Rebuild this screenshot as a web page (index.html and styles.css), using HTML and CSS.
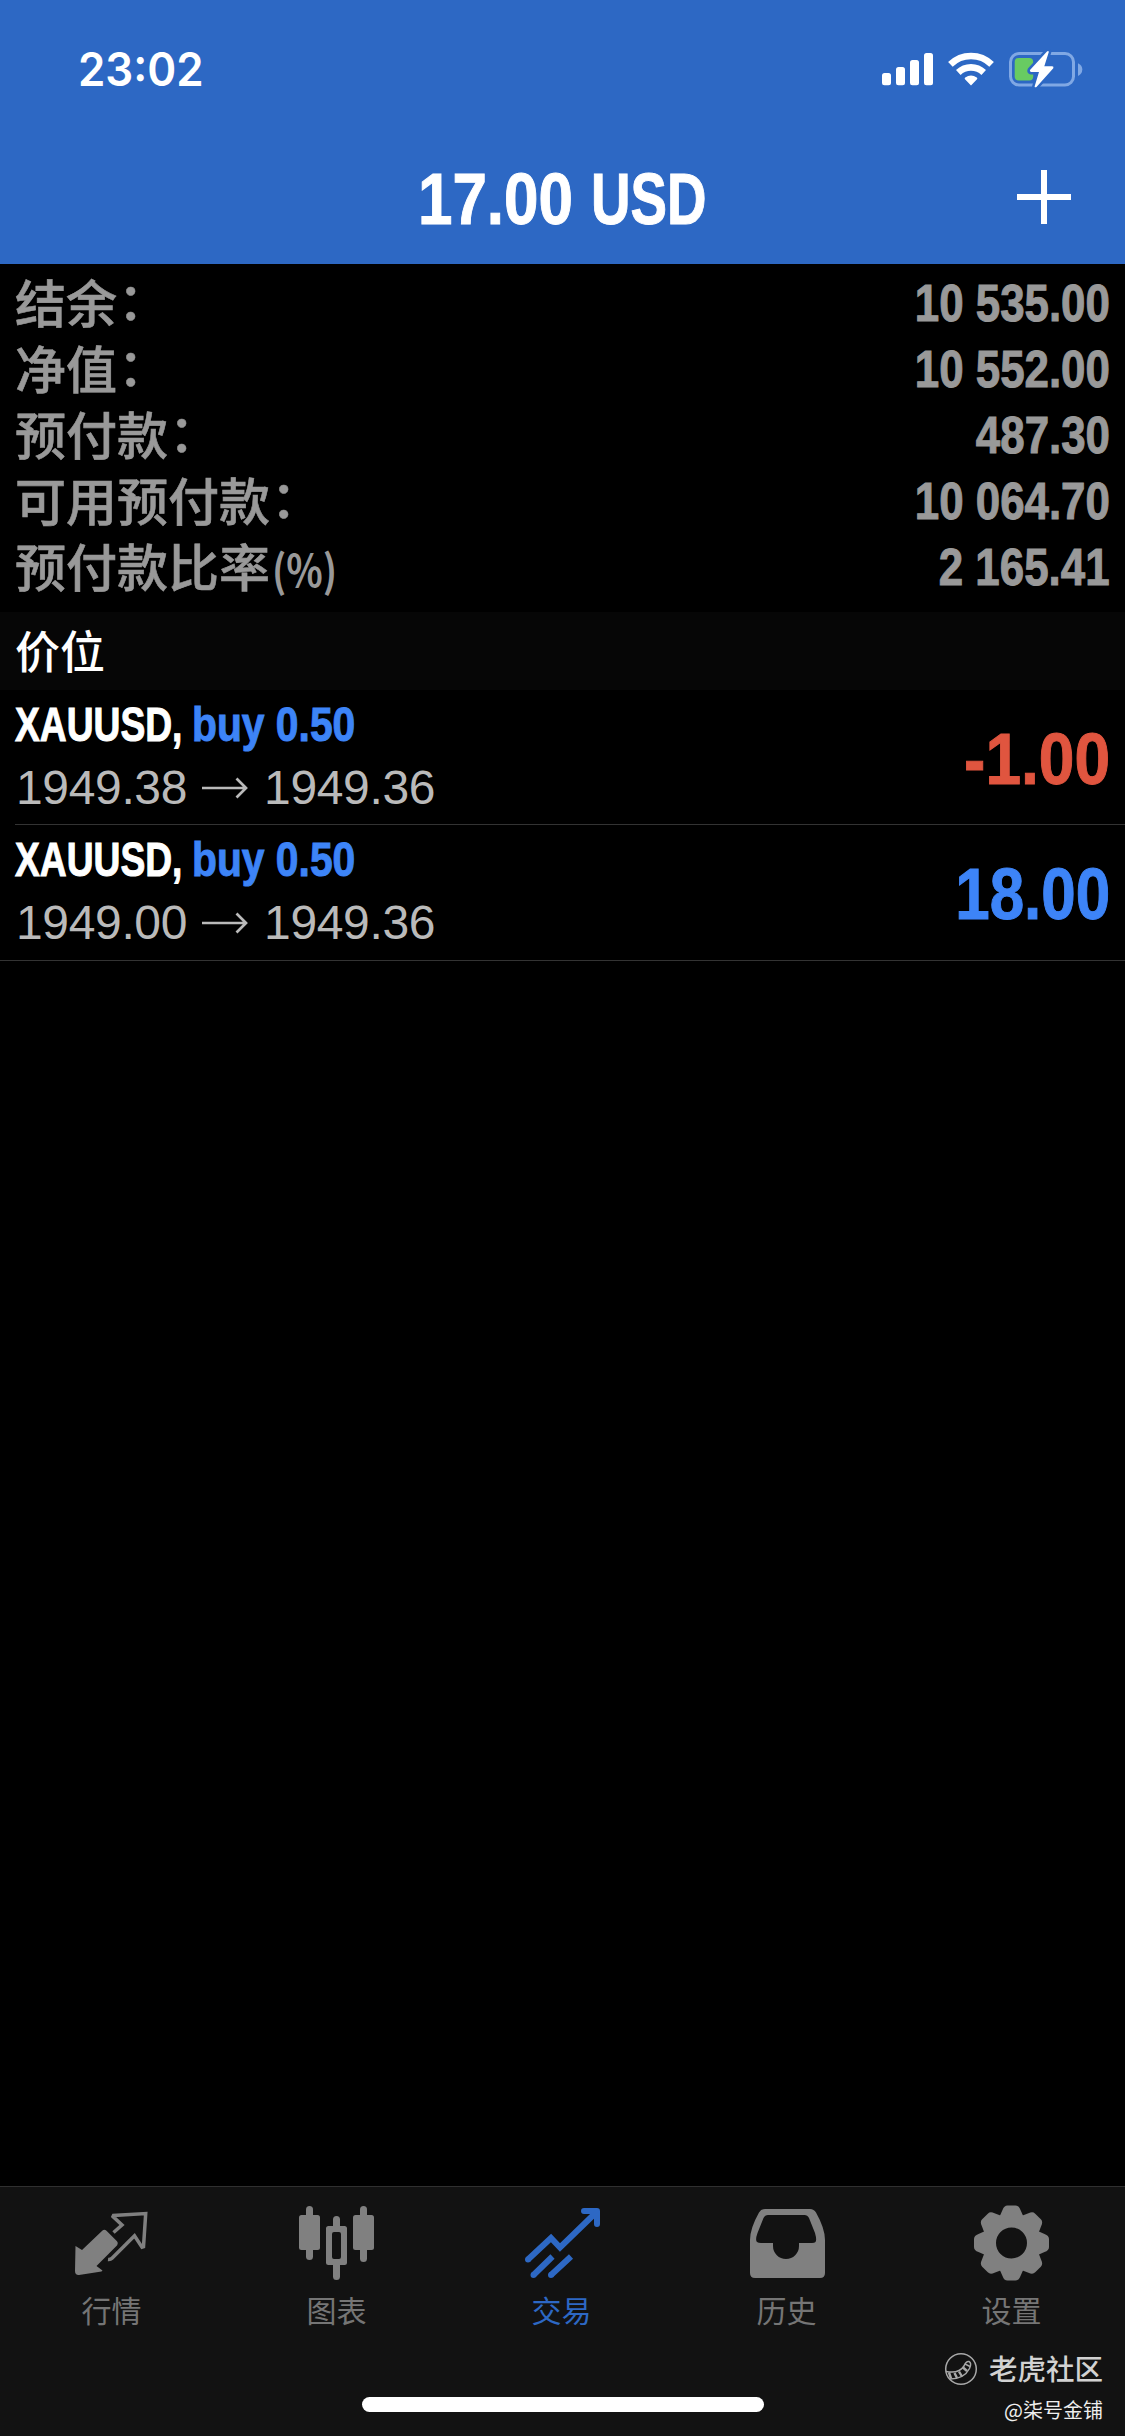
FILE: index.html
```html
<!DOCTYPE html>
<html lang="zh-CN">
<head>
<meta charset="utf-8">
<title>交易</title>
<link rel="stylesheet" href="styles.css">
</head>
<body>
<div class="screen">
  <header class="header">
    <div class="status">
      <span class="time">23:02</span>
      <svg class="status-icons" width="202" height="40" viewBox="881 49 202 40">
        <g fill="#fff">
          <rect x="882" y="73" width="9" height="12.300" rx="2.500"/>
          <rect x="896" y="67" width="9" height="18.300" rx="2.500"/>
          <rect x="910" y="60" width="9" height="25.300" rx="2.500"/>
          <rect x="924" y="53" width="9" height="32.300" rx="2.500"/>
          <path d="M971 85.500l-6-6.200q-.8-1 .2-1.700q5.800-4.400 11.600 0q1 .7.200 1.700z"/>
        </g>
        <g fill="none" stroke="#fff" stroke-width="6.600">
          <path d="M950.400 64.400a29.500 29.500 0 0 1 41.200 0"/>
          <path d="M958.300 72.500a18.300 18.300 0 0 1 25.400 0"/>
        </g>
        <rect x="1010.500" y="53.500" width="63" height="31.500" rx="8.500" fill="none" stroke="#80a8e4" stroke-width="3"/>
        <path d="M1078 63.300q4.300 2 4.300 6.300t-4.300 6.300z" fill="#80a8e4"/>
        <rect x="1014.700" y="58" width="18.500" height="22.500" rx="4" fill="#68cb62"/>
        <path d="M1047 51.500l-17 18.500q-.8 1.700 1.200 1.900h7.800l-4.400 14.600q.4 1.500 1.900.4l16.800-18.700q.8-1.700-1.200-1.900h-7.800l4.500-14.300q-.2-1.500-1.800-.5z" fill="#fff" stroke="#2d68c4" stroke-width="5" paint-order="stroke"/>
      </svg>
    </div>
    <div class="titlebar">
      <h1 class="title"><span class="cond t-num">17.00</span><span class="cond t-cur">USD</span></h1>
      <svg class="plus" width="54" height="54" viewBox="0 0 54 54"><path d="M0 27h54M27 0v54" stroke="#fff" stroke-width="6"/></svg>
    </div>
  </header>

  <dl class="summary">
    <div class="line"><dt>结余<i>：</i></dt><dd class="cond">10 535.00</dd></div>
    <div class="line"><dt>净值<i>：</i></dt><dd class="cond">10 552.00</dd></div>
    <div class="line"><dt>预付款<i>：</i></dt><dd class="cond">487.30</dd></div>
    <div class="line"><dt>可用预付款<i>：</i></dt><dd class="cond">10 064.70</dd></div>
    <div class="line"><dt>预付款比率<b>(%)</b></dt><dd class="cond">2 165.41</dd></div>
  </dl>

  <h2 class="section">价位</h2>

  <ul class="positions">
    <li class="position">
      <div class="info">
        <div class="deal"><span class="symbol cond">XAUUSD,</span><span class="side cond">buy 0.50</span></div>
        <div class="prices"><span class="from">1949.38</span><svg class="arrow" width="46" height="22" viewBox="0 0 46 22"><path d="M0 11h44M34.500 1.500L44 11l-9.500 9.500" fill="none" stroke="#bababa" stroke-width="2.700"/></svg><span>1949.36</span></div>
      </div>
      <span class="profit cond loss">-1.00</span>
    </li>
    <li class="position">
      <div class="info">
        <div class="deal"><span class="symbol cond">XAUUSD,</span><span class="side cond">buy 0.50</span></div>
        <div class="prices"><span class="from">1949.00</span><svg class="arrow" width="46" height="22" viewBox="0 0 46 22"><path d="M0 11h44M34.500 1.500L44 11l-9.500 9.500" fill="none" stroke="#bababa" stroke-width="2.700"/></svg><span>1949.36</span></div>
      </div>
      <span class="profit cond gain">18.00</span>
    </li>
  </ul>

  <footer class="footer">
    <nav class="tabs">
      <a class="tab">
        <svg width="76" height="76" viewBox="74 2205 76 76">
          <path d="M75.500 2246l6.500 4 20.500-19.500q2-1.500 4 .3l10.500 10.500q1.800 2 .2 4L96.500 2266l6 4.500-1 1-22.500 3.500q-4 .2-4-4z" fill="#808080"/>
          <path d="M113.500 2232.500l8.500-7.500-9-8.500.5-1 32.200-2-2.200 33.200-1.500.5-7.500-11.500-22.500 22.500q-1.500 1.500-4 1.200" fill="none" stroke="#808080" stroke-width="3.500"/>
        </svg>
        <span>行情</span>
      </a>
      <a class="tab">
        <svg width="76" height="76" viewBox="299 2205 76 76" fill="#808080">
          <rect x="306" y="2206" width="7" height="54" rx="3.500"/><rect x="299" y="2215" width="21" height="35" rx="2.500"/>
          <rect x="360" y="2206" width="7" height="56" rx="3.500"/><rect x="353" y="2215" width="21" height="35" rx="2.500"/>
          <path d="M333 2226v-6.500a3.500 3.500 0 0 1 7 0v6.500h4.500q2.500 0 2.500 2.500v34q0 2.500-2.500 2.500H340v11.500a3.500 3.500 0 0 1-7 0V2265h-4.500q-2.500 0-2.500-2.500v-34q0-2.500 2.500-2.500zm1 6q-2 0-2 2v23q0 2 2 2h5q2 0 2-2v-23q0-2-2-2z" fill-rule="evenodd"/>
        </svg>
        <span>图表</span>
      </a>
      <a class="tab active">
        <svg width="76" height="76" viewBox="523 2205 76 76" fill="none" stroke="#2d68c4" stroke-width="6">
          <path d="M527 2259.500l23-21.500 9 9.500 36-35" stroke-linejoin="miter"/>
          <path d="M583 2211h13v13" stroke-linecap="round" stroke-linejoin="round"/>
          <path d="M532.500 2275l19-18.500M550 2275l20-18.500"/>
          <path d="M527 2259.500h0M532.500 2275h0M550 2275h0" stroke-linecap="round"/>
        </svg>
        <span>交易</span>
      </a>
      <a class="tab">
        <svg width="76" height="76" viewBox="748 2205 76 76">
          <path fill="#808080" fill-rule="evenodd" d="M764 2209h45q4 0 6 3.500 9 16 9 27.500v33q0 5-5 5h-65q-5 0-5-5v-33q0-11.500 9-27.500 2-3.500 6-3.500zm3 6q-3 0-4.500 3l-6 15q-2.500 7-.5 9 1.500 1 4 1h12v3a13 13 0 0 0 26 0v-3h13q2.500 0 3.500-1 1.500-2-.5-9l-6-15q-1.500-3-4.500-3z"/>
        </svg>
        <span>历史</span>
      </a>
      <a class="tab">
        <svg width="76" height="76" viewBox="-37.500 -38 76 76">
          <defs><path id="tooth" d="M-13-24l4-9q1.500-4.500 5-4.500h8q3.500 0 5 4.500l4 9z"/></defs>
          <g fill="#808080">
            <use href="#tooth"/><use href="#tooth" transform="rotate(45)"/><use href="#tooth" transform="rotate(90)"/><use href="#tooth" transform="rotate(135)"/><use href="#tooth" transform="rotate(180)"/><use href="#tooth" transform="rotate(225)"/><use href="#tooth" transform="rotate(270)"/><use href="#tooth" transform="rotate(315)"/>
          </g>
          <circle r="22" fill="none" stroke="#808080" stroke-width="13"/>
        </svg>
        <span>设置</span>
      </a>
    </nav>
    <div class="home"></div>
    <div class="credit">
      <div class="brand">
        <svg width="34" height="34" viewBox="-17 -17 34 34" fill="none" stroke="#a8a8a8" stroke-width="1.500">
          <circle r="15.300"/>
          <path d="M-15 2.500Q-2 5 3-3Q5-8 8-7.500Q11-6 8.500-.5Q3 10-11 10"/>
          <path d="M-12 3.500l2 6M-6.500 4l2.500 5M-2 2.500l3 5M2-1.500l4 3.500" stroke-width="2.400"/>
          <path d="M4-5l5 2.500"/>
        </svg>
        <span>老虎社区</span>
      </div>
      <div class="author">@柒号金铺</div>
    </div>
  </footer>
</div>
</body>
</html>
```
FILE: styles.css
```css
* { box-sizing: border-box; margin: 0; padding: 0; }
body {
  background: #000;
  font-family: "Liberation Sans", "Noto Sans CJK SC", sans-serif;
}
svg { display: block; }
.screen {
  width: 1125px;
  height: 2436px;
  display: flex;
  flex-direction: column;
  background: #000;
  overflow: hidden;
}

/* condensed bold face */
.cond {
  display: inline-block;
  font-weight: 700;
  white-space: pre;
  transform-origin: 0 50%;
  -webkit-text-stroke: 1px currentColor;
}

.header {
  height: 264px;
  flex: none;
  background: #2d68c4;
}
.status {
  height: 132px;
  padding: 49px 42px 0 78px;
  display: flex;
  justify-content: space-between;
  align-items: flex-start;
}
.time {
  font: 600 46px/40px Inter, sans-serif;
  color: #fff;
  transform: scaleX(.955);
  transform-origin: 0 50%;
}
.titlebar {
  height: 132px;
  display: grid;
  grid-template-columns: 1fr auto 1fr;
  padding-right: 54px;
  padding-left: 54px;
}
.title {
  grid-column: 2;
  width: 290px;
  display: flex;
  font-size: 72px;
  line-height: 134px;
  color: #fff;
}
.t-num { width: 173px; transform: scaleX(.86); }
.t-cur { transform: scaleX(.76); }
.plus { justify-self: end; margin-top: 38px; }

.summary {
  height: 348px;
  padding: 6px 15px 0;
  color: #999;
}
.line {
  height: 66px;
  display: flex;
  justify-content: space-between;
  line-height: 66px;
  font-size: 51px;
}
.line dt {
  font-family: "Noto Sans CJK SC", sans-serif;
  font-weight: 500;
  line-height: 63px;
  -webkit-text-stroke: .6px currentColor;
}
.line dt i {
  display: inline-block;
  font-style: normal;
  transform: translate(1px, -3px);
}
.line dt b {
  display: inline-block;
  margin-left: 2px;
  font-size: 44px;
  font-weight: 700;
  -webkit-text-stroke: 0;
  transform: scaleX(.86);
  transform-origin: 0 50%;
}
.line dd { line-height: 68px; transform: scaleX(.86); transform-origin: 100% 50%; }

.section {
  height: 78px;
  padding-left: 15px;
  background: #060606;
  color: #fff;
  font: 500 45px/76px "Noto Sans CJK SC", sans-serif;
}

.positions { list-style: none; }
.position {
  height: 135px;
  padding: 0 15px;
  display: flex;
  justify-content: space-between;
  background: linear-gradient(#333, #333) 15px 100% / 1125px 1px no-repeat;
}
.position:last-child { height: 136px; background-position: 0 100%; }
.deal { height: 68px; line-height: 70px; font-size: 48px; color: #fff; display: flex; }
.symbol { width: 177px; transform: scaleX(.775); }
.side { color: #3d84f7; transform: scaleX(.85); }
.prices {
  height: 60px;
  padding-left: 1px;
  line-height: 60px;
  font-size: 48px;
  letter-spacing: -.35px;
  color: #bababa;
  display: flex;
  align-items: center;
}
.arrow { margin: 0 16px 0 15px; }
.profit { font-size: 72px; line-height: 138px; transform-origin: 100% 50%; }
.loss { color: #e0553f; transform: scaleX(.89); }
.gain { color: #3d84f7; transform: scaleX(.86); }

.footer {
  position: relative;
  height: 250px;
  margin-top: auto;
  border-top: 1px solid #303030;
  background: #121212;
}
.tabs {
  height: 147px;
  margin-right: 1px;
  margin-left: -1px;
  display: grid;
  grid-template-columns: repeat(5, 1fr);
}
.tab {
  padding-top: 18px;
  display: flex;
  flex-direction: column;
  align-items: center;
  color: #757575;
  font: 400 30px/40px "Noto Sans CJK SC", sans-serif;
}
.tab span { margin-top: 8px; }
.active { color: #2d68c4; }
.home {
  width: 402px;
  height: 15px;
  margin: 63px auto 0;
  border-radius: 8px;
  background: #fff;
}
.credit {
  position: absolute;
  right: 22px;
  top: 160px;
  display: flex;
  flex-direction: column;
  align-items: flex-end;
  font-family: "Noto Sans CJK SC", sans-serif;
}
.brand {
  display: flex;
  align-items: center;
  gap: 11px;
  height: 44px;
  color: #d2d2d2;
  font-size: 28.500px;
  line-height: 40px;
  font-weight: 500;
}
.brand span { margin-top: -3px; }
.author { height: 38px; line-height: 38px; font-size: 20px; color: #eee; }
```
